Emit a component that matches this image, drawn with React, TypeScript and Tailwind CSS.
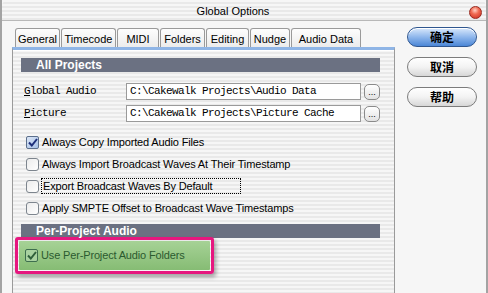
const stripes =
  "bg-[repeating-linear-gradient(180deg,#f6f6f6_0px,#f6f6f6_2px,#e9e9e9_2px,#e9e9e9_4px)]";

type TabProps = { label: string; width: number; active?: boolean };

function Tab({ label, width, active }: TabProps) {
  if (active) {
    return (
      <div
        className="relative z-10 -mb-[2px] flex h-[24px] items-center justify-center rounded-t-[4px] border border-b-0 border-[#5a8ad2] bg-gradient-to-b from-[#e8f2fd] to-[#a9cbf1] text-[11px] text-black"
        style={{ width }}
      >
        {label}
      </div>
    );
  }
  return (
    <div
      className="flex h-[19px] items-center justify-center rounded-t-[3px] border border-b-0 border-[#9a9a9a] bg-gradient-to-b from-[#fdfdfd] to-[#ececec] pt-[2px] text-[11px] text-black"
      style={{ width }}
    >
      {label}
    </div>
  );
}

function CheckBox({ checked, green }: { checked?: boolean; green?: boolean }) {
  return (
    <div
      className={
        green
          ? "flex h-[13px] w-[13px] shrink-0 items-center justify-center rounded-[2px] border border-[#3e6e4e] bg-[#a9d2a0]"
          : checked
            ? "flex h-[13px] w-[13px] shrink-0 items-center justify-center rounded-[2px] border border-[#5b6f8c] bg-gradient-to-br from-[#dbe6f6] to-[#a7c0e6]"
            : "h-[13px] w-[13px] shrink-0 rounded-[3px] border border-[#7d858e] bg-gradient-to-br from-[#ececec] to-white"
      }
    >
      {checked && (
        <svg width="10" height="9" viewBox="0 0 10 9">
          <path
            d="M1 4.5 L3.8 7.5 L9 1"
            fill="none"
            stroke={green ? "#2f5f3a" : "#1d2f7a"}
            strokeWidth="2"
          />
        </svg>
      )}
    </div>
  );
}

function SectionBar({ title }: { title: string }) {
  return (
    <div className="ml-[8px] flex h-[14px] w-[359px] items-center bg-[#6b7182] pl-[15px] text-[12px] font-bold leading-none text-white">
      {title}
    </div>
  );
}

function PathRow({ underline, rest, value }: { underline: string; rest: string; value: string }) {
  return (
    <div className="flex h-[17px] items-center">
      <div className="w-[113px] pl-[11px] font-['Liberation_Mono',monospace] text-[11px] tracking-[-0.6px] text-black">
        <span className="underline">{underline}</span>
        {rest}
      </div>
      <div className="flex h-[17px] w-[235px] items-center border border-[#9a9a9a] bg-white pl-[3px] font-['Liberation_Mono',monospace] text-[11px] tracking-[-0.6px] text-black">
        {value}
      </div>
      <div className="ml-[3px] flex h-[16px] w-[16px] items-end justify-center rounded-[5px] border border-[#8a8a8a] bg-gradient-to-b from-white to-[#e2e2e2] pb-[2px] text-[9px] leading-none text-black">
        ...
      </div>
    </div>
  );
}

function PillButton({ label, primary }: { label: string; primary?: boolean }) {
  return (
    <div
      className={
        primary
          ? "flex h-[20px] w-[70px] items-center justify-center rounded-full border border-[#2f568f] bg-gradient-to-b from-[#dbe9fb] via-[#8fb7ec] to-[#4b86d6] font-['Noto_Sans_CJK_SC',sans-serif] text-[12px] font-bold text-black shadow-[inset_0_1px_0_#ffffff]"
          : "flex h-[20px] w-[70px] items-center justify-center rounded-full border border-[#7c7c7c] bg-gradient-to-b from-white via-[#f3f3f3] to-[#d7d7d7] font-['Noto_Sans_CJK_SC',sans-serif] text-[12px] font-bold text-black"
      }
    >
      {label}
    </div>
  );
}

const options = [
  { label: "Always Copy Imported Audio Files", checked: true },
  { label: "Always Import Broadcast Waves At Their Timestamp" },
  { label: "Export Broadcast Waves By Default", focus: true },
  { label: "Apply SMPTE Offset to Broadcast Wave Timestamps" },
];

export default function App() {
  return (
    <div className="relative h-[293px] w-[488px] overflow-hidden border-x-2 border-[#a3a3a3] bg-[#f6f6f6] font-['Liberation_Sans',Arial,sans-serif] text-black">
      {/* title bar */}
      <div className={`relative flex h-[21px] items-center justify-center rounded-t-[6px] border-b border-[#b8b8b8] pr-[22px] ${stripes}`}>
        <span className="pt-[3px] text-[11px] text-black">Global Options</span>
        <div className="absolute right-[4px] top-[6px] h-[13px] w-[13px] rounded-full border border-[#9a2a20] bg-[radial-gradient(circle_at_45%_30%,#ffd0c4_0%,#f06a52_40%,#c8281c_100%)]" />
      </div>

      <div className="flex">
        {/* left column */}
        <div className="flex flex-col pl-[10px] pt-[7px]">
          <div className="flex items-end gap-[1px] pl-[3px]">
            <Tab label="General" width={45} />
            <Tab label="Timecode" width={55} />
            <Tab label="MIDI" width={42} />
            <Tab label="Folders" width={45} />
            <Tab label="Editing" width={43} />
            <Tab label="Nudge" width={40} />
            <Tab label="Audio Data" width={70} />
          </div>

          <div className={`h-[250px] w-[383px] border-x border-[#9a9a9a] border-t-[3px] border-t-[#8fb5e6] ${stripes}`}>
            <div className="border-t border-white pt-[7px]">
              <SectionBar title="All Projects" />

              <div className="mt-[11px] flex flex-col gap-[5px]">
                <PathRow underline="G" rest="lobal Audio" value="C:\Cakewalk Projects\Audio Data" />
                <PathRow underline="P" rest="icture" value="C:\Cakewalk Projects\Picture Cache" />
              </div>

              <div className="mt-[9px] flex flex-col">
                {options.map((o) => (
                  <div key={o.label} className="flex h-[22px] items-center pl-[13px]">
                    <CheckBox checked={o.checked} />
                    <span
                      className={
                        o.focus
                          ? "ml-[2px] w-[200px] border border-dotted border-black pl-[1px] text-[11px] leading-[14px] tracking-[-0.15px]"
                          : "ml-[3px] text-[11px] leading-[14px] tracking-[-0.15px]"
                      }
                    >
                      {o.label}
                    </span>
                  </div>
                ))}
              </div>

              <div className="mt-[5px]">
                <SectionBar title="Per-Project Audio" />
              </div>

              <div className="-mt-[1px] ml-[2px] h-[37px] w-[199px] rounded-[3px] border-[3px] border-[#e6177f] p-[1px] shadow-[2px_3px_4px_rgba(0,0,0,0.35)]">
                <div className="flex h-full items-center rounded-[1px] bg-gradient-to-b from-[#a6d296] to-[#86bc74] pl-[6px]">
                  <CheckBox checked green />
                  <span className="ml-[3px] text-[11px] tracking-[-0.15px] text-[#2b5a2f]">Use Per-Project Audio Folders</span>
                </div>
              </div>
            </div>
          </div>
        </div>

        {/* right column */}
        <div className="flex flex-col gap-[10px] pl-[12px] pt-[6px]">
          <PillButton label="确定" primary />
          <PillButton label="取消" />
          <PillButton label="帮助" />
        </div>
      </div>
    </div>
  );
}
